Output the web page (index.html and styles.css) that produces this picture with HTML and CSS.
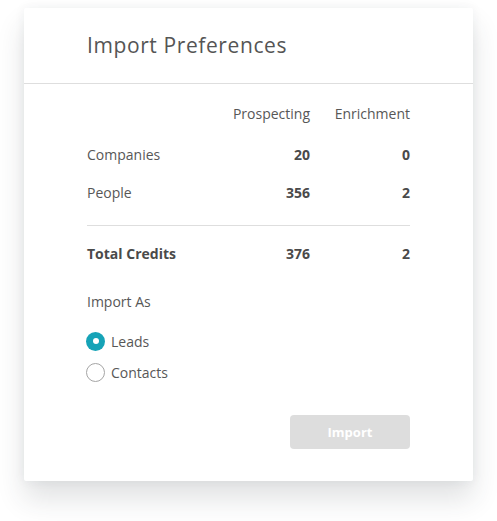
FILE: index.html
```html
<!DOCTYPE html>
<html>
<head>
<meta charset="utf-8">
<link rel="stylesheet" href="styles.css">
</head>
<body>
<div class="card">
  <div class="header"><h1 class="title">Import Preferences</h1></div>
  <div class="content">
    <div class="row head">
      <span class="label"></span>
      <span class="col">Prospecting</span>
      <span class="col">Enrichment</span>
    </div>
    <div class="row r-companies">
      <span class="label">Companies</span>
      <span class="col num">20</span>
      <span class="col num">0</span>
    </div>
    <div class="row r-people">
      <span class="label">People</span>
      <span class="col num">356</span>
      <span class="col num">2</span>
    </div>
    <div class="divider"></div>
    <div class="row r-total">
      <span class="label strong">Total Credits</span>
      <span class="col num">376</span>
      <span class="col num">2</span>
    </div>
    <div class="import-as">Import As</div>
    <label class="radio r-leads"><span class="dot checked"></span><span>Leads</span></label>
    <label class="radio r-contacts"><span class="dot"></span><span>Contacts</span></label>
    <div class="actions"><button class="btn" disabled>Import</button></div>
  </div>
</div>
</body>
</html>
```
FILE: styles.css
```css
* { box-sizing: border-box; }
html, body { background: #fff; }
body {
  margin: 0;
  padding: 8px 0 40px 24px;
  min-height: 521px;
  font-family: "Open Sans", "Liberation Sans", sans-serif;
  color: #575757;
}
.card {
  width: 449px;
  height: 473px;
  background: #fff;
  border-radius: 2px;
  box-shadow: 0 18px 28px rgba(40, 50, 60, 0.14), 0 0 12px rgba(40, 50, 60, 0.06);
}
.header {
  height: 76px;
  border-bottom: 1px solid #dedede;
  padding: 0 63px;
  display: flex;
  align-items: center;
}
.title {
  margin: 0;
  font-size: 21px;
  font-weight: 400;
  letter-spacing: 0.6px;
  color: #555;
  position: relative;
  top: -1px;
}
.content {
  padding: 20px 63px 0;
}
.row {
  display: flex;
  height: 20px;
  line-height: 20px;
  font-size: 14px;
}
.label { flex: 1; }
.col { width: 100px; text-align: right; }
.num { font-weight: 700; color: #4a4a4a; }
.strong { font-weight: 700; color: #4a4a4a; }
.r-companies { margin-top: 21px; }
.r-people { margin-top: 18px; }
.divider {
  margin-top: 22px;
  height: 1px;
  background: #dedede;
}
.r-total { margin-top: 18px; }
.import-as {
  margin-top: 28px;
  height: 20px;
  line-height: 20px;
  font-size: 14px;
}
.radio {
  display: flex;
  align-items: center;
  gap: 6px;
  height: 20px;
  font-size: 14px;
  margin-left: -1px;
}
.r-leads { margin-top: 19px; }
.r-contacts { margin-top: 11px; }
.dot {
  width: 19px;
  height: 19px;
  border-radius: 50%;
  border: 1px solid #a5a5a5;
  background: #fff;
  display: flex;
  align-items: center;
  justify-content: center;
}
.dot.checked {
  border: none;
  background: #16a3b7;
}
.dot.checked::after {
  content: "";
  width: 6px;
  height: 6px;
  border-radius: 50%;
  background: #fff;
}
.actions {
  margin-top: 33px;
  display: flex;
  justify-content: flex-end;
}
.btn {
  width: 120px;
  height: 34px;
  border: none;
  border-radius: 4px;
  background: #dddddd;
  color: #fff;
  font-family: inherit;
  font-size: 13px;
  font-weight: 700;
}
```
